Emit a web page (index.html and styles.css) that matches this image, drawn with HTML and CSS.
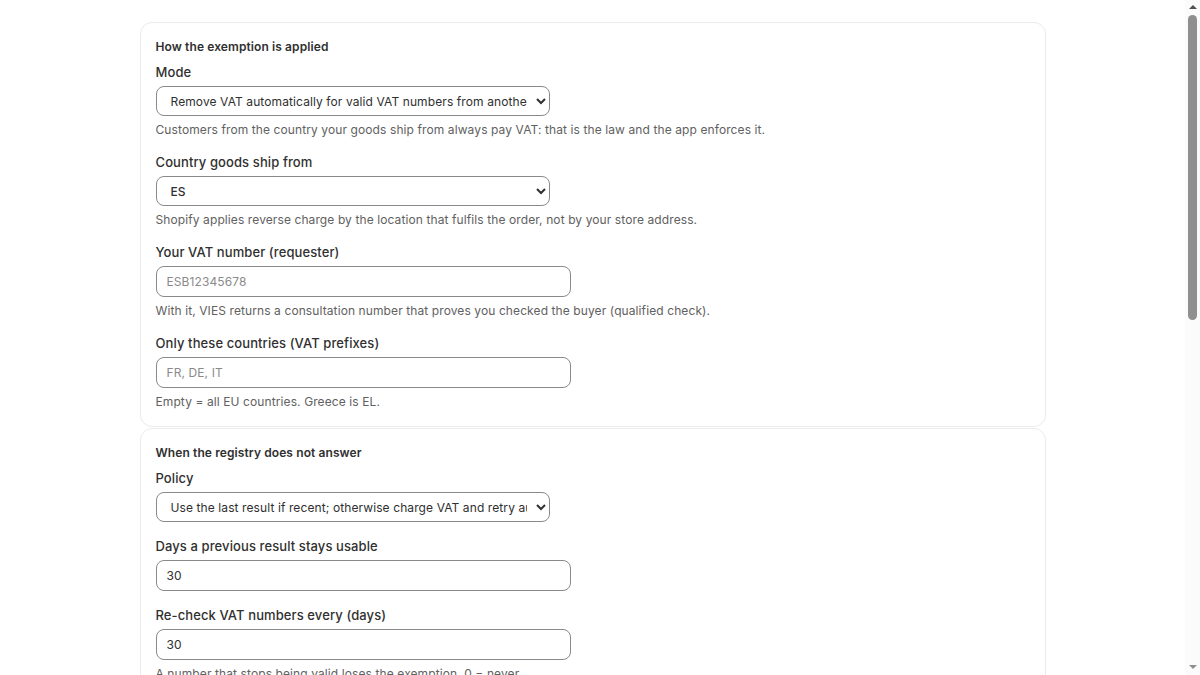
FILE: index.html
```html
<!DOCTYPE html>
<html lang="en">
<head>
<meta charset="utf-8">
<title>VAT exemption settings</title>
<link rel="stylesheet" href="styles.css">
</head>
<body>
<main class="page">
  <section class="card">
    <h2 class="card-title">How the exemption is applied</h2>
    <div class="fields">
      <div class="field">
        <label class="label" for="mode">Mode</label>
        <select id="mode" class="select">
          <option>Remove VAT automatically for valid VAT numbers from another EU country</option>
          <option>Only validate, never remove VAT</option>
        </select>
        <p class="help">Customers from the country your goods ship from always pay VAT: that is the law and the app enforces it.</p>
      </div>
      <div class="field">
        <label class="label" for="origin">Country goods ship from</label>
        <select id="origin" class="select select-strong">
          <option>ES</option>
          <option>FR</option>
          <option>DE</option>
        </select>
        <p class="help">Shopify applies reverse charge by the location that fulfils the order, not by your store address.</p>
      </div>
      <div class="field">
        <label class="label" for="requester">Your VAT number (requester)</label>
        <input id="requester" class="input" type="text" placeholder="ESB12345678">
        <p class="help">With it, VIES returns a consultation number that proves you checked the buyer (qualified check).</p>
      </div>
      <div class="field">
        <label class="label" for="prefixes">Only these countries (VAT prefixes)</label>
        <input id="prefixes" class="input" type="text" placeholder="FR, DE, IT">
        <p class="help">Empty = all EU countries. Greece is EL.</p>
      </div>
    </div>
  </section>

  <section class="card">
    <h2 class="card-title">When the registry does not answer</h2>
    <div class="fields">
      <div class="field">
        <label class="label" for="policy">Policy</label>
        <select id="policy" class="select">
          <option>Use the last result if recent; otherwise charge VAT and retry automatically</option>
          <option>Always charge VAT</option>
        </select>
      </div>
      <div class="field">
        <label class="label" for="days">Days a previous result stays usable</label>
        <input id="days" class="input" type="text" value="30">
      </div>
      <div class="field">
        <label class="label" for="recheck">Re-check VAT numbers every (days)</label>
        <input id="recheck" class="input" type="text" value="30">
        <p class="help">A number that stops being valid loses the exemption. 0 = never.</p>
      </div>
    </div>
  </section>

  <section class="card">
    <h2 class="card-title">Checkout message</h2>
    <div class="fields">
      <div class="field">
        <label class="label" for="msg-ok">Shown when the VAT number is valid</label>
        <input id="msg-ok" class="input" type="text" placeholder="VAT removed: intra-community reverse charge">
        <p class="help">Appears under the VAT field at checkout.</p>
      </div>
      <div class="field">
        <label class="label" for="msg-bad">Shown when the VAT number is not valid</label>
        <input id="msg-bad" class="input" type="text" placeholder="This VAT number could not be verified">
        <p class="help">Leave empty to use the default text.</p>
      </div>
      <div class="field">
        <label class="label" for="note">Invoice note</label>
        <input id="note" class="input" type="text" placeholder="Reverse charge – Article 196 Directive 2006/112/EC">
        <p class="help">Added to the order note so it can be printed on invoices.</p>
      </div>
    </div>
  </section>

  <div class="actions">
    <button class="button" type="button">Save</button>
  </div>
</main>

<div class="scrollbar" aria-hidden="true">
  <span class="scroll-arrow scroll-arrow-up"></span>
  <span class="scroll-thumb"></span>
  <span class="scroll-arrow scroll-arrow-down"></span>
</div>
</body>
</html>
```

FILE: styles.css
```css
html, body {
  margin: 0;
  padding: 0;
  background: #ffffff;
}

body {
  font-family: Inter, "Noto Sans", "Liberation Sans", sans-serif;
  color: #303030;
  letter-spacing: 0.1px;
  padding-right: 15px;
}

.page {
  width: 906px;
  margin: 0 auto;
  padding: 22px 0 140px;
  box-sizing: border-box;
}

.card {
  background: #ffffff;
  border: 1px solid #ebebeb;
  border-radius: 12px;
  padding: 16px 15px;
  margin-bottom: 1px;
}

.card-title {
  margin: 0 0 7px;
  font-size: 12px;
  line-height: 16px;
  font-weight: 600;
  color: #303030;
}

.fields {
  display: flex;
  flex-direction: column;
  gap: 14px;
}

.field {
  display: flex;
  flex-direction: column;
  align-items: flex-start;
}

.label {
  font-size: 13px;
  line-height: 20px;
  font-weight: 500;
  color: #303030;
  margin-bottom: 4px;
}

.select {
  width: 394px;
  height: 30px;
  box-sizing: border-box;
  border: 1px solid #8a8a8a;
  border-radius: 8px;
  background: #ffffff;
  color: #303030;
  font-family: Inter, "Noto Sans", "Liberation Sans", sans-serif;
  font-size: 12px;
  letter-spacing: 0.1px;
  padding: 0 6px 0 10px;
  margin: 0;
}

.select-strong {
  font-weight: 500;
}

.input {
  width: 415px;
  height: 31px;
  box-sizing: border-box;
  border: 1px solid #8a8a8a;
  border-radius: 8px;
  background: #ffffff;
  color: #303030;
  font-family: Inter, "Noto Sans", "Liberation Sans", sans-serif;
  font-size: 12px;
  letter-spacing: 0.1px;
  padding: 0 10px;
  margin: 0;
}

.input::placeholder {
  color: #8a8a8a;
}

.help {
  margin: 6px 0 0;
  font-size: 12px;
  line-height: 16px;
  color: #616161;
}

.actions {
  display: flex;
  justify-content: flex-end;
  padding-top: 16px;
}

.button {
  font-family: Inter, "Noto Sans", "Liberation Sans", sans-serif;
  font-size: 12px;
  font-weight: 600;
  color: #ffffff;
  background: #303030;
  border: 0;
  border-radius: 8px;
  padding: 8px 14px;
}

/* page scrollbar as it appears in the capture */
.scrollbar {
  position: fixed;
  top: 0;
  right: 0;
  width: 15px;
  height: 100vh;
  background: #fbfbfb;
  display: flex;
  flex-direction: column;
  align-items: center;
}

.scroll-arrow {
  width: 0;
  height: 0;
  border-left: 4px solid transparent;
  border-right: 4px solid transparent;
}

.scroll-arrow-up {
  margin-top: 5px;
  border-bottom: 4px solid #505050;
}

.scroll-thumb {
  margin-top: 6px;
  width: 9px;
  height: 305px;
  border-radius: 5px;
  background: #8f8f8f;
}

.scroll-arrow-down {
  margin-top: auto;
  margin-bottom: 6px;
  border-top: 4px solid #8f8f8f;
}
```
